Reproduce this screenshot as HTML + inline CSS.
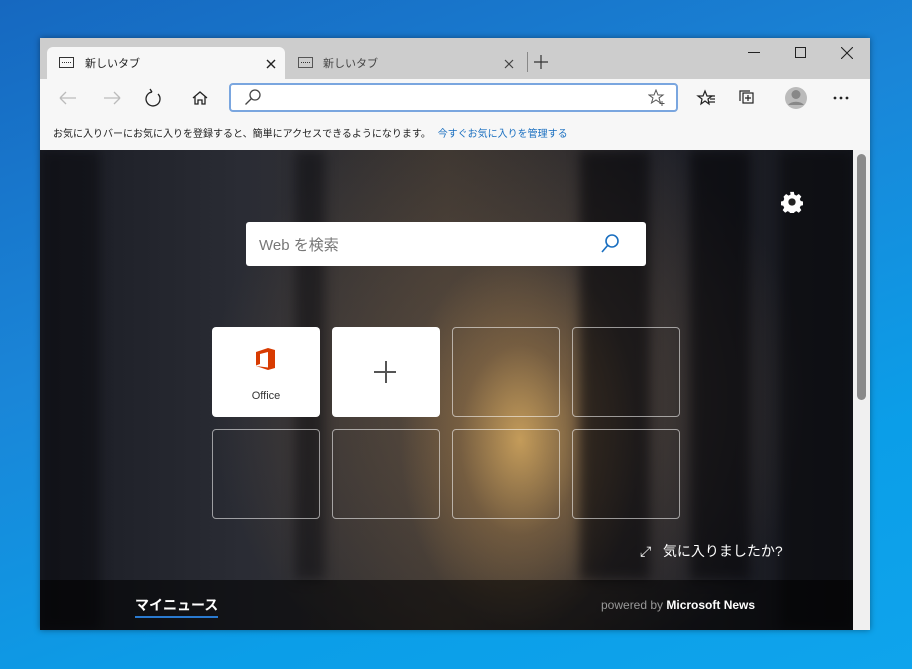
<!DOCTYPE html>
<html><head><meta charset="utf-8"><style>
*{margin:0;padding:0;box-sizing:border-box}
body{width:912px;height:669px;overflow:hidden;position:relative;font-family:"Liberation Sans","Noto Sans CJK JP",sans-serif;
background:linear-gradient(160deg,#1668c0 0%,#1a86d8 40%,#0b9ee8 75%,#0fa4ec 100%)}
.win{position:absolute;left:40px;top:38px;width:830px;height:592px;background:#f7f7f7;box-shadow:0 0 6px rgba(0,0,0,.4)}
.tabs{position:absolute;left:0;top:0;width:830px;height:41px;background:#cdcdcd}
.tab{position:absolute;top:9px;height:32px;font-size:11px;color:#222}
.t1{left:7px;width:238px;background:#f7f7f7;border-radius:6px 6px 0 0}
.ticon{position:absolute;left:12px;top:10px;width:15px;height:11px;border:1.3px solid #333}
.ticon:after{content:"";position:absolute;left:2px;top:4px;width:9px;height:2px;border-top:1.5px dotted #333}
.tab .lbl{position:absolute;left:38px;top:8px}
.tool{position:absolute;top:41px;left:0;width:830px;height:38px}
.addr{position:absolute;left:189px;top:4px;width:449px;height:29px;background:#fff;border:2px solid #7aa6df;border-radius:4px}
.fav{position:absolute;top:79px;left:0;width:830px;height:33px;font-size:10px;color:#222;padding:8px 0 0 13px}
.fav a{color:#1a6fc0;margin-left:4px}
.content{position:absolute;left:0;top:112px;width:813px;height:480px;overflow:hidden;
background:
radial-gradient(ellipse 120px 190px at 480px 290px,rgba(215,170,95,.85),rgba(150,115,70,.5) 50%,transparent 100%),
radial-gradient(ellipse 300px 300px at 470px 250px,rgba(110,90,70,.7),transparent 100%),
linear-gradient(90deg,#1a1c24 0%,#2a2c34 25%,#3a3430 50%,#22232a 75%,#15171e 100%)}
.tr{position:absolute;top:0;background:rgba(10,10,14,.5);filter:blur(6px)}
.scroll{position:absolute;left:813px;top:112px;width:17px;height:480px;background:#f0f0f0}
.thumb{position:absolute;left:4px;top:4px;width:9px;height:246px;background:#8a8a8a;border-radius:5px}
.search{position:absolute;left:206px;top:72px;width:400px;height:44px;background:#fff;border-radius:3px;font-size:15px;color:#777;padding:12px 0 0 13px}
.tile{position:absolute;width:108px;height:90px;border:1px solid rgba(255,255,255,.55);border-radius:4px}
.w{background:#fff;border:none}
.bottom{position:absolute;left:0;top:430px;width:813px;height:50px;background:rgba(0,0,0,.55)}
</style></head><body>
<div class="win">
<div class="tabs">
 <div class="tab t1"><div class="ticon"></div><span class="lbl">新しいタブ</span>
 <svg style="position:absolute;left:219px;top:12px" width="10" height="10" stroke="#222" stroke-width="1.4"><path d="M1 1l8 8M9 1l-8 8"/></svg></div>
 <div class="tab" style="left:250px;width:230px;color:#444"><div class="ticon" style="left:8px;border-color:#555"></div><span class="lbl" style="left:33px">新しいタブ</span>
 <svg style="position:absolute;left:214px;top:12px" width="10" height="10" stroke="#444" stroke-width="1.2"><path d="M1 1l8 8M9 1l-8 8"/></svg></div>
 <div style="position:absolute;left:487px;top:14px;width:1px;height:20px;background:#888"></div>
 <svg style="position:absolute;left:494px;top:17px" width="14" height="14" stroke="#333" stroke-width="1.2"><path d="M7 0v14M0 7h14"/></svg>
 <div style="position:absolute;left:708px;top:14px;width:12px;height:1px;background:#222"></div>
 <div style="position:absolute;left:755px;top:9px;width:11px;height:11px;border:1px solid #222"></div>
 <svg style="position:absolute;left:801px;top:9px" width="12" height="12" stroke="#222" stroke-width="1.1"><path d="M0 0l12 12M12 0l-12 12"/></svg>
</div>
<div class="tool">
 <svg style="position:absolute;left:0;top:0" width="189" height="38" fill="none" stroke-width="1.3">
  <path d="M20 19h16M20 19l6-6M20 19l6 6" stroke="#bbb"/>
  <path d="M64 19h16M80 19l-6-6M80 19l-6 6" stroke="#bbb"/>
  <path d="M112 13a7 7 0 1 0 6 2M112 13l-2-3M112 13l-3 1" stroke="#222"/>
  <path d="M153 19l7-6 7 6M155 17v8h3v-4h4v4h3v-8" stroke="#222"/>
 </svg>
 <div class="addr"><svg width="40" height="25" style="position:absolute;left:8px;top:0" fill="none" stroke="#444" stroke-width="1.3"><circle cx="16" cy="10" r="5"/><path d="M12.5 13.5l-6 6"/></svg>
 <svg width="18" height="18" style="position:absolute;right:10px;top:4px" fill="none" stroke="#555" stroke-width="1"><path d="M8 1l2 5h5l-4 3 1.5 5L8 11l-4.5 3L5 9 1 6h5z"/><path d="M14 12v5M11.5 14.5h5"/></svg></div>
 <svg style="position:absolute;left:650px;top:0" width="180" height="38" fill="none" stroke="#222" stroke-width="1.2">
  <path d="M15 12l2 5h5l-4 3 1 5-4-3-4 3 1-5-4-3h5z"/><path d="M19 17h6M20 20h5M19 23h6"/>
  <rect x="53" y="14" width="10" height="10"/><path d="M50 22v-10h10M58 16v6M55 19h6"/>
  <circle cx="106" cy="19" r="11" fill="#bbb" stroke="none"/><circle cx="106" cy="15.5" r="4.5" fill="#888" stroke="none"/><path d="M98 26a9 6 0 0 1 16 0" fill="#888" stroke="none"/>
  <circle cx="145" cy="19" r=".8" fill="#222"/><circle cx="151" cy="19" r=".8" fill="#222"/><circle cx="157" cy="19" r=".8" fill="#222"/>
 </svg>
</div>
<div class="fav">お気に入りバーにお気に入りを登録すると、簡単にアクセスできるようになります。 <a>今すぐお気に入りを管理する</a></div>
<div class="content">
 <div class="tr" style="left:0;width:60px;height:480px;background:rgba(8,8,12,.5)"></div>
 <div class="tr" style="left:255px;width:30px;height:430px"></div>
 <div class="tr" style="left:540px;width:70px;height:430px;background:rgba(5,5,8,.6)"></div>
 <div class="tr" style="left:650px;width:60px;height:430px;background:rgba(5,5,8,.6)"></div>
 <div class="tr" style="left:740px;width:73px;height:480px;background:rgba(5,5,8,.5)"></div>
 <svg style="position:absolute;left:741px;top:41px" width="22" height="22" viewBox="0 0 24 24"><path fill="#fff" d="M10 1h4l.6 3 2.2 1 2.6-1.7 2.8 2.8-1.7 2.6 1 2.2 3 .6v4l-3 .6-1 2.2 1.7 2.6-2.8 2.8-2.6-1.7-2.2 1-.6 3h-4l-.6-3-2.2-1-2.6 1.7-2.8-2.8 1.7-2.6-1-2.2-3-.6v-4l3-.6 1-2.2L2.8 6.1l2.8-2.8 2.6 1.7 2.2-1z"/><circle cx="12" cy="12" r="4" fill="#222"/></svg>
 <div class="search">Web を検索<svg width="24" height="24" style="position:absolute;left:352px;top:10px" fill="none" stroke="#1a6fc0" stroke-width="1.6"><circle cx="14" cy="9" r="6"/><path d="M10 13l-6 7"/></svg></div>
 <div class="tile w" style="left:172px;top:177px"><svg style="position:absolute;left:43px;top:20px" width="22" height="24" viewBox="0 0 22 24"><path fill="#d83b01" d="M1 5L13 1l7 2v18l-7 2-12-4 12 1.5V5l-8 2v10l-4 1.5z"/></svg><div style="position:absolute;top:63px;width:100%;text-align:center;font-size:11px;color:#333">Office</div></div>
 <div class="tile w" style="left:292px;top:177px"><div style="position:absolute;left:42px;top:44px;width:22px;height:1.5px;background:#555"></div><div style="position:absolute;left:53px;top:34px;width:1.5px;height:22px;background:#555"></div></div>
 <div class="tile" style="left:412px;top:177px"></div>
 <div class="tile" style="left:532px;top:177px"></div>
 <div class="tile" style="left:172px;top:279px"></div>
 <div class="tile" style="left:292px;top:279px"></div>
 <div class="tile" style="left:412px;top:279px"></div>
 <div class="tile" style="left:532px;top:279px"></div>
 <div style="position:absolute;left:600px;top:391px;color:#fff;font-size:14px">⤢&nbsp;&nbsp; 気に入りましたか?</div>
 <div class="bottom">
  <div style="position:absolute;left:95px;top:15px;color:#fff;font-size:14px;font-weight:bold;border-bottom:2px solid #2a7ad0;padding-bottom:1px">マイニュース</div>
  <div style="position:absolute;left:561px;top:18px;font-size:12px;color:#999">powered by <b style="color:#fff">Microsoft News</b></div>
 </div>
</div>
<div class="scroll"><div class="thumb"></div></div>
</div>
</body></html>
